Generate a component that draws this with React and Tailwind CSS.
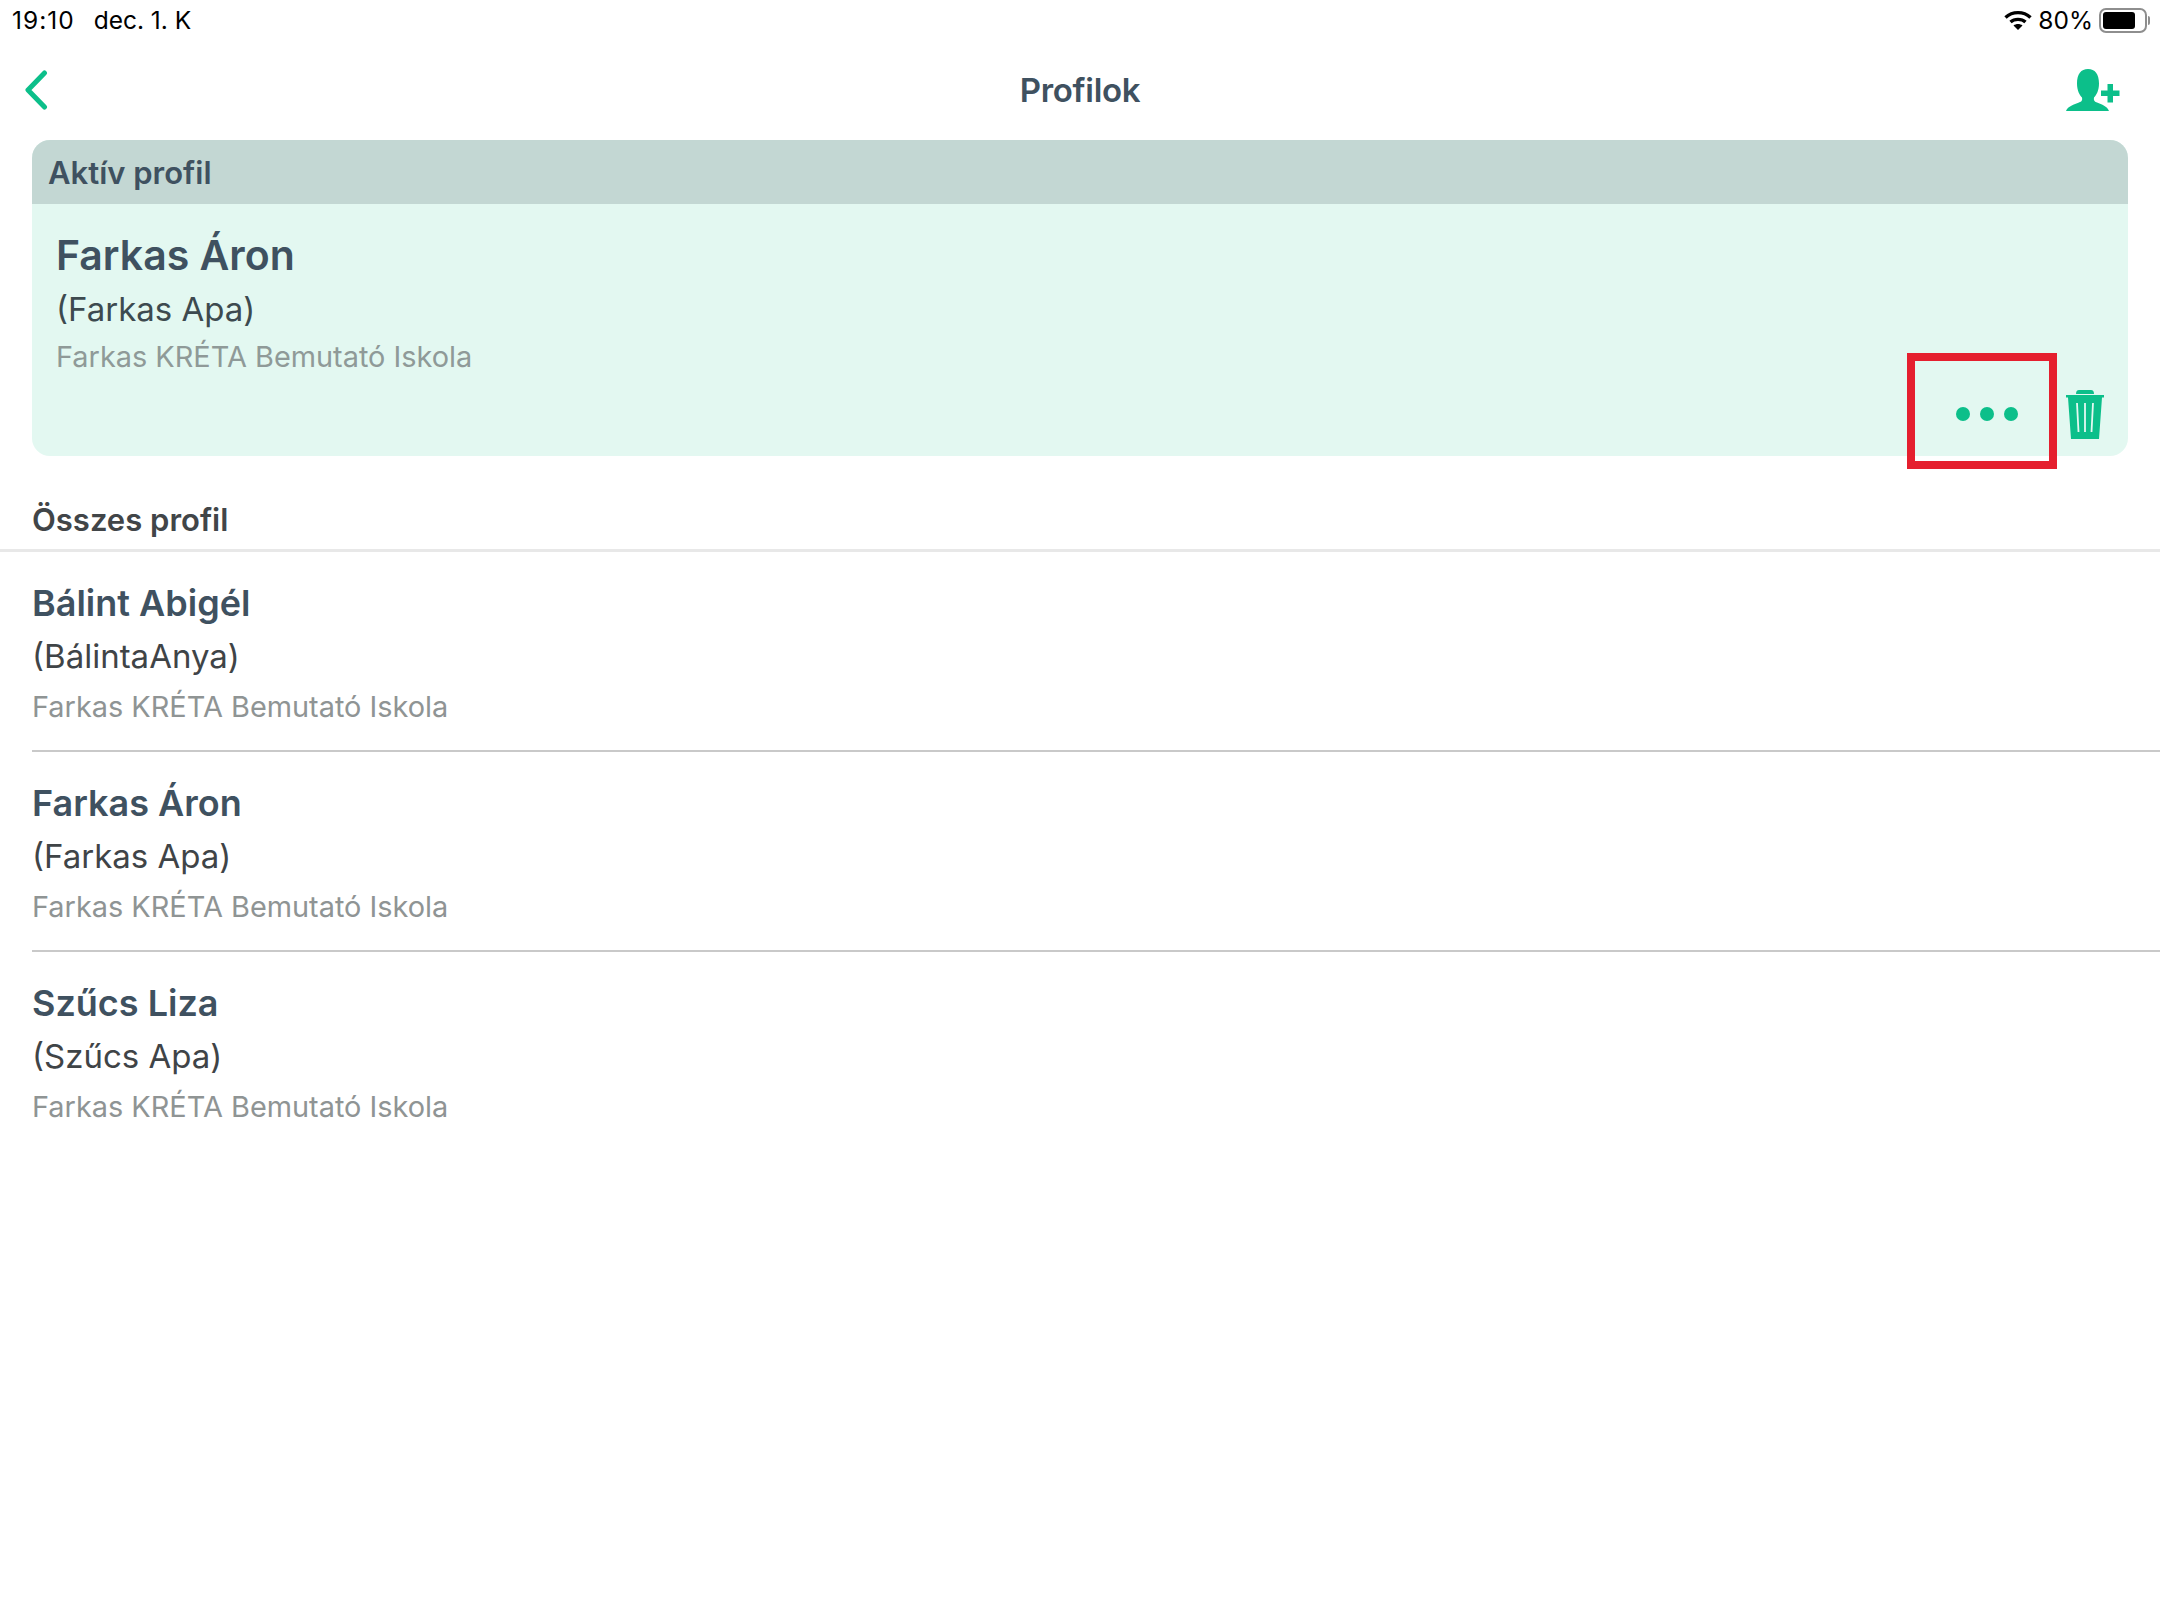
const profiles = [
  { name: "Bálint Abigél", parent: "(BálintaAnya)" },
  { name: "Farkas Áron", parent: "(Farkas Apa)" },
  { name: "Szűcs Liza", parent: "(Szűcs Apa)" },
];

const school = "Farkas KRÉTA Bemutató Iskola";

const StatusBar = () => (
  <div className="h-[40px] flex items-center justify-between pl-[12px] pr-[10px] text-[24.500px] text-black">
    <div className="flex gap-[19px]">
      <span className="tracking-[1px]">19:10</span>
      <span>dec. 1. K</span>
    </div>
    <div className="flex items-center gap-[6px]">
      <svg width="28" height="22" viewBox="0 0 28 22" fill="none">
        <path d="M1.5 8.5C8.5 2 19.500 2 26.500 8.500" stroke="#000" strokeWidth="3.400" />
        <path d="M6.500 13C10.500 9.500 17.500 9.500 21.500 13" stroke="#000" strokeWidth="3.400" />
        <path d="M14 21l-4.500-4.500c2.500-2 6.500-2 9 0z" fill="#000" />
      </svg>
      <span>80%</span>
      <div className="flex items-center gap-[1px]">
        <div className="w-[48px] h-[25px] border-2 border-[#8e8e8e] rounded-[7px] p-[2px]">
          <div className="w-[80%] h-full bg-black rounded-[3px]" />
        </div>
        <div className="w-[2px] h-[9px] bg-[#8e8e8e] rounded-r-full" />
      </div>
    </div>
  </div>
);

const BackIcon = () => (
  <svg width="24" height="40" viewBox="0 0 24 40" fill="none">
    <path d="M20.500 3L4 20l16.500 17" stroke="#0cbf8a" strokeWidth="5" strokeLinecap="round" strokeLinejoin="round" />
  </svg>
);

const AddProfileIcon = () => (
  <svg width="56" height="42" viewBox="0 0 56 42" fill="#0cbf8a">
    <path d="M1 42c2-5 8-6.500 13-8.500 3-1 3.500-2.500 3-5-2.500-2.500-5-7-5-14C12 5 16 0 23 0s11 5 11 14.500c0 7-2.500 11.500-5 14-.5 2.500 0 4 3 5 5 2 10 3.500 12 8.500z" />
    <path d="M42.500 15h5.500v6.500h6.500v5.500H48v6.500h-5.500V27H36v-5.500h6.500z" />
  </svg>
);

const TrashIcon = () => (
  <svg width="38" height="50" viewBox="0 0 38 50">
    <path d="M10 5c0-2.500 1-4 3-4h12c2 0 3 1.500 3 4z" fill="#0cbf8a" />
    <path d="M0 6h38v2.500h-2L33 50H5L2 8.500H0z" fill="#0cbf8a" />
    <path d="M11 14l1.500 29M19 14v29M27 14l-1.500 29" stroke="#e3f8f1" strokeWidth="1.800" />
  </svg>
);

const App = () => {
  return (
    <div className="w-[2160px] h-[1620px] bg-white font-['Inter',sans-serif] overflow-hidden">
      <StatusBar />

      {/* Nav bar */}
      <div className="h-[100px] grid grid-cols-[1fr_auto_1fr] items-center px-[24px]">
        <BackIcon />
        <h1 className="text-[33px] pt-[2px] font-semibold text-[#3f5160] tracking-[-0.3px]">Profilok</h1>
        <div className="flex justify-end pr-[15px]">
          <AddProfileIcon />
        </div>
      </div>

      {/* Active profile card */}
      <div className="relative mx-[32px] h-[316px] rounded-[18px] bg-[#e3f8f1]">
        <div className="h-[64px] flex items-center px-[16px] pt-[2px] bg-[#c3d7d3] rounded-t-[18px] text-[31px] font-semibold text-[#3f5160]">
          Aktív profil
        </div>
        <div className="pl-[24px] pt-[25px]">
          <div className="text-[41px] leading-[52px] font-semibold text-[#3f5160]">Farkas Áron</div>
          <div className="text-[33px] leading-[40px] mt-[8px] text-[#3d4a4f]">(Farkas Apa)</div>
          <div className="text-[28.900px] leading-[36px] mt-[10px] text-[#8f9a98]">{school}</div>
        </div>

        <div className="absolute left-[1875px] top-[213px] w-[150px] h-[116px] border-[8px] border-[#e51f2e]" />
        <div className="absolute right-[24px] top-[249px] flex items-center gap-[10px]">
          <div className="flex gap-[10px]">
            <div className="w-[14px] h-[14px] rounded-full bg-[#0cbf8a]" />
            <div className="w-[14px] h-[14px] rounded-full bg-[#0cbf8a]" />
            <div className="w-[14px] h-[14px] rounded-full bg-[#0cbf8a]" />
          </div>
          <div className="ml-[38px]">
            <TrashIcon />
          </div>
        </div>
      </div>

      {/* All profiles */}
      <div className="h-[96px] flex items-end pl-[32px] pb-[6px] border-b-[3px] border-[#e8e8e8] text-[31px] font-semibold text-[#414548]">
        Összes profil
      </div>
      <div className="pl-[32px]">
        {profiles.map((p) => (
          <div key={p.name} className="h-[200px] pt-[27px] border-b-2 border-[#c9c9c9] last:border-b-0">
            <div className="text-[36px] leading-[48px] font-semibold text-[#3f5160]">{p.name}</div>
            <div className="text-[33px] leading-[40px] mt-[9px] text-[#3f4447]">{p.parent}</div>
            <div className="text-[28.900px] leading-[36px] mt-[13px] text-[#8f9494]">{school}</div>
          </div>
        ))}
      </div>
    </div>
  );
};

export default App;
